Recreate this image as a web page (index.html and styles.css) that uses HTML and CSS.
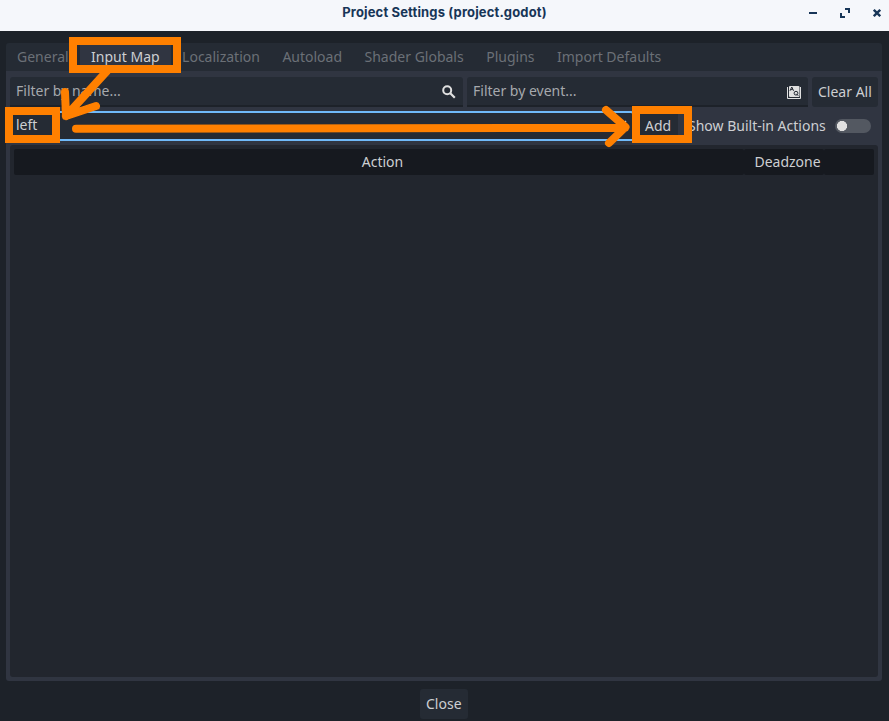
FILE: index.html
```html
<!DOCTYPE html>
<html lang="en">
<head>
<meta charset="utf-8">
<title>Project Settings (project.godot)</title>
<link rel="stylesheet" href="styles.css">
</head>
<body>
<header class="titlebar">
  <h1>Project Settings (project.godot)</h1>
  <div class="controls">
    <svg width="9" height="10" viewBox="0 0 9 10"><path d="M0 5h8" stroke="#173557" stroke-width="2"/></svg>
    <svg width="10" height="10" viewBox="0 0 10 10"><path d="M5 1h4v4M1 5v4h4" fill="none" stroke="#173557" stroke-width="2"/></svg>
    <svg width="8" height="10" viewBox="0 0 8 10"><path d="M.8 1.8l6.4 6.4M7.2 1.8L.8 8.2" stroke="#173557" stroke-width="2.4"/></svg>
  </div>
</header>
<main class="window">
  <nav class="tabs">
    <span class="tab">General</span><span class="tab active">Input Map</span><span class="tab">Localization</span><span class="tab">Autoload</span><span class="tab">Shader Globals</span><span class="tab">Plugins</span><span class="tab">Import Defaults</span>
  </nav>
  <section class="panel">
    <div class="row filters">
      <div class="field name"><span>Filter by name...</span>
        <svg width="14" height="14" viewBox="0 0 14 14"><circle cx="5.2" cy="5.2" r="4" fill="none" stroke="#e0e0e0" stroke-width="2"/><path d="M8 8l4.800 4.800" stroke="#e0e0e0" stroke-width="2.2"/></svg>
      </div>
      <div class="field event"><span>Filter by event...</span>
        <svg width="14" height="14" viewBox="0 0 14 14"><path d="M.5 2v11.500h13V2" fill="none" stroke="#e0e0e0"/><rect x="2" y="1" width="10.500" height="11" rx="1" fill="#e0e0e0"/><path d="M3 5.800L4.800 2l1.800 3.800M3.800 4.600h2" fill="none" stroke="#252b34"/><circle cx="9" cy="8.200" r="1.900" fill="none" stroke="#252b34"/><path d="M9.300 8.800l2 2" stroke="#252b34"/></svg>
      </div>
      <div class="button clear">Clear All</div>
    </div>
    <div class="row actions">
      <div class="field focus"><span>left</span><svg width="14" height="14" viewBox="0 0 14 14"><path d="M2 2l10 10M12 2L2 12" stroke="#c9cbce" stroke-width="1.5"/></svg></div>
      <div class="button add">Add</div>
      <span class="builtin">Show Built-in Actions</span>
      <span class="switch"></span>
    </div>
    <div class="tree">
      <div class="columns"><span>Action</span><span>Deadzone</span><span></span></div>
    </div>
  </section>
  <footer><div class="button close">Close</div></footer>
</main>
<svg class="marks" width="889" height="721" viewBox="0 0 889 721">
  <g fill="none" stroke="#ff8000" stroke-width="8">
    <rect x="73" y="41" width="104" height="28"/>
    <rect x="9" y="111" width="47" height="28"/>
    <rect x="636" y="110" width="52" height="29"/>
    <path stroke-linecap="round" stroke-linejoin="round" d="M107 71L66 116M65 92L66 116L96 106M76 128.800L625 127.800M606 110L625.500 127L609 143"/>
  </g>
</svg>
</body>
</html>
```
FILE: styles.css
```css
* { box-sizing: border-box; }
body {
  margin: 0;
  width: 889px;
  height: 721px;
  overflow: hidden;
  background: #1d2229;
  color: #cdcfd2;
  font: 14px/20px "Noto Sans", sans-serif;
  white-space: nowrap;
}
svg { display: block; flex: none; }
.titlebar {
  position: relative;
  height: 31px;
  background: #f5f7fb;
}
h1 {
  margin: 0;
  padding-top: 2px;
  text-align: center;
  color: #173557;
  font: 700 13px/20px Inter, sans-serif;
  letter-spacing: 0.14px;
}
.controls {
  position: absolute;
  top: 8px;
  right: 8px;
  display: flex;
  gap: 22px;
}
.controls svg:last-child { margin-left: 1px; }
.window { padding: 12px 7px 0 6px; }
.tabs {
  display: flex;
  height: 28px;
  background: #252b34;
  border-radius: 3px 3px 0 0;
}
.tab { padding: 4px 11.240px; color: #6b7077; }
.tab:first-child { padding-left: 11px; }
.active { background: #303541; color: #cdcfd2; }
.panel {
  height: 610px;
  padding: 6px 4px 4px;
  background: #303541;
  border-radius: 0 0 3px 3px;
}
.row { display: flex; gap: 4px; height: 30px; margin-bottom: 4px; }
.field {
  display: flex;
  justify-content: space-between;
  padding: 4px 7px 4px 6px;
  background: #252b34;
  border-bottom: 2px solid #1d2229;
  border-radius: 3px 3px 0 0;
  color: #a6a9ad;
}
.field svg { margin-top: 4px; }
.name { width: 453px; }
.event { width: 341px; }
.button {
  padding: 5px 6px;
  background: #252b34;
  border-radius: 3px;
}
.clear { width: 66px; }
.focus {
  width: 624px;
  padding: 2px 4px;
  border: 2px solid #70bafa;
  color: #cdcfd2;
}
.add { width: 40px; padding-left: 7px; }
.builtin { margin-left: 6px; padding-top: 5px; }
.switch {
  width: 36px;
  height: 14px;
  margin: 8px 7px 0 auto;
  border-radius: 7px;
  background: radial-gradient(circle at 7px 7px, #e0e0e0 4.800px, transparent 5.300px), #535861;
}
.tree {
  height: 532px;
  padding: 4px;
  background: #22262e;
  border-radius: 3px;
}
.columns {
  display: grid;
  grid-template-columns: 730px 80px 50px;
  height: 26px;
  line-height: 26px;
  text-align: center;
}
.columns span {
  padding-left: 7px;
  background: #16191f;
  border-radius: 2px;
}
footer { display: flex; justify-content: center; padding-top: 8px; }
.close { width: 48px; height: 30px; }
.marks { position: absolute; top: 0; left: 0; }
```
